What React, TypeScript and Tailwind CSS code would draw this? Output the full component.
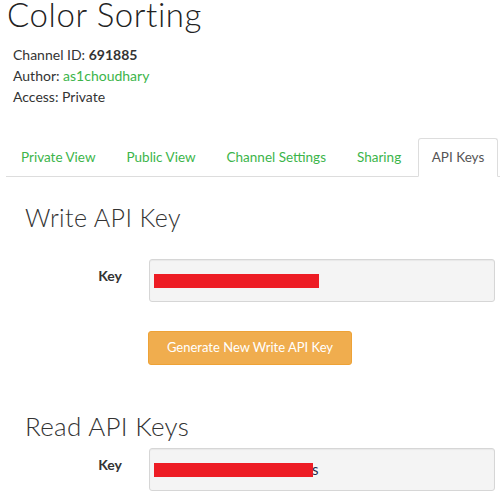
import React from 'react';

const tabs = ['Private View', 'Public View', 'Channel Settings', 'Sharing'];

function KeyRow({ barWidth, tail }: { barWidth: string; tail?: boolean }) {
    return (
        <div className="flex items-start">
            <div className="w-[149px] shrink-0 pr-[27px] pt-[6px] text-right text-[14px] font-bold text-[#333]">Key</div>
            <div className="relative h-[43px] flex-1 mr-[5px] rounded-[3px] border border-[#d6d6d6] bg-[#f4f4f4] shadow-[inset_0_1px_1px_rgba(0,0,0,0.05)]">
                <div className={`absolute left-[4px] top-[14px] h-[14px] bg-[#ed1c24] ${barWidth}`} />
                {tail && <span className="absolute left-[162px] top-[11px] text-[15px] leading-[18px] text-[#1f2d4a]">s</span>}
            </div>
        </div>
    );
}

export default function App() {
    return (
        <div className="w-[500px] h-[496px] overflow-hidden bg-white text-[#333]" style={{ fontFamily: 'Lato, "Liberation Sans", sans-serif' }}>
            <h1 className="pl-[7px] text-[33px] leading-[28px] font-light text-[#222] tracking-[0.6px] whitespace-nowrap">Color Sorting</h1>

            {/* channel info */}
            <div className="pl-[13px] pt-[16px] text-[14px] leading-[21px] text-[#333]">
                <div>Channel ID: <span className="font-bold">691885</span></div>
                <div>Author: <span className="text-[#3cb54a]">as1choudhary</span></div>
                <div>Access: Private</div>
            </div>

            {/* tabs */}
            <div className="mt-[31px] ml-[6px] flex items-end border-b border-[#ddd] h-[39px]">
                {tabs.map((t) => (
                    <div key={t} className="whitespace-nowrap px-[15px] pb-[10px] mr-[1px] text-[13.5px] leading-[18px] text-[#3cb54a]">{t}</div>
                ))}
                <div className="ml-[auto] mr-[2px] -mb-px h-[39px] w-[80px] flex items-center justify-center whitespace-nowrap rounded-t-[3px] border border-[#ddd] border-b-white bg-white text-[13.5px] text-[#555]">API Keys</div>
            </div>

            <h2 className="pl-[25px] pt-[26px] text-[25px] leading-[29px] font-light text-[#333] tracking-[0.4px]">Write API Key</h2>
            <div className="mt-[27px]">
                <KeyRow barWidth="w-[165px]" />
            </div>
            <div className="pl-[148px] mt-[29px]">
                <button className="h-[34px] w-[204px] rounded-[3px] border border-[#eea236] bg-[#f0ad4e] text-[13px] text-white">Generate New Write API Key</button>
            </div>

            <h2 className="pl-[25px] pt-[46px] text-[26px] leading-[30px] font-light text-[#333] tracking-[0.3px]">Read API Keys</h2>
            <div className="mt-[7px]">
                <KeyRow barWidth="w-[159px]" tail />
            </div>
        </div>
    );
}
